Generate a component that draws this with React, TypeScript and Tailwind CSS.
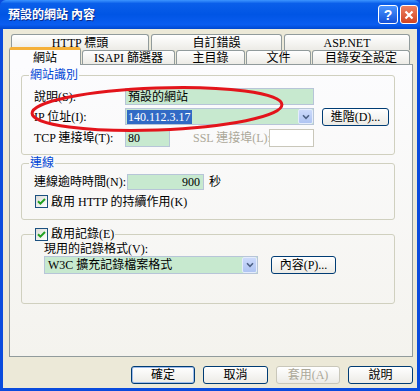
import type { ReactNode } from "react";

const FONT = "font-['Liberation_Serif','Noto_Sans_CJK_TC',serif]";

function Btn({
  children,
  className = "",
  disabled = false,
  primary = false,
}: {
  children: ReactNode;
  className?: string;
  disabled?: boolean;
  primary?: boolean;
}) {
  return (
    <div
      className={`flex h-[18px] items-center justify-center whitespace-nowrap rounded-[3px] border bg-linear-to-b from-white to-[#ECEBE6] text-[12px] leading-[14px] ${
        disabled ? "border-[#C9C7BA] text-[#ACA899]" : "border-[#003C74] text-black"
      } ${primary ? "shadow-[inset_0_0_0_1px_#9FBCEB]" : ""} ${className}`}
    >
      {children}
    </div>
  );
}

function Check() {
  return (
    <div className="flex h-[13px] w-[13px] shrink-0 items-center justify-center border border-[#1C5180] bg-linear-to-br from-[#DCDCD7] to-white">
      <svg width="9" height="9" viewBox="0 0 9 9">
        <path d="M1 4.2 L3.4 6.6 L8 2" fill="none" stroke="#21A121" strokeWidth="2" />
      </svg>
    </div>
  );
}

function ComboArrow() {
  return (
    <div className="flex h-full w-[15px] items-center justify-center rounded-[2px] border border-[#E4ECFC] bg-linear-to-b from-[#CCDAFB] to-[#AFC4F2]">
      <svg width="8" height="6" viewBox="0 0 8 6">
        <path d="M1 1.3 L4 4.3 L7 1.3" fill="none" stroke="#4D6185" strokeWidth="1.6" />
      </svg>
    </div>
  );
}

function Tab({ label, className = "" }: { label: string; className?: string }) {
  return (
    <div
      className={`flex items-center justify-center whitespace-nowrap rounded-t-[3px] border border-b-0 border-[#919B9C] bg-linear-to-b from-white to-[#ECEBE6] text-[12px] leading-[14px] ${className}`}
    >
      {label}
    </div>
  );
}

export default function App() {
  return (
    <div className={`relative flex h-[391px] w-[420px] flex-col overflow-hidden bg-[#0A4BDD] text-black ${FONT}`}>
      {/* title bar */}
      <div className="flex h-[29px] shrink-0 items-center justify-between rounded-t-[6px] bg-[linear-gradient(180deg,#3D95FF_0%,#0A5FEA_12%,#0055E5_50%,#0A5DF0_85%,#0048D0_100%)] pl-[8px] pr-[2px]">
        <span className="text-[12px] font-bold leading-[14px] text-white [text-shadow:1px_1px_0_#0A2A8A]">
          預設的網站 內容
        </span>
        <div className="flex items-center gap-[2px]">
          <div className="flex h-[19px] w-[20px] items-center justify-center rounded-[3px] border border-white bg-linear-to-b from-[#4C95FF] to-[#1550D8] text-[14px] font-bold leading-none text-white font-['Liberation_Sans',sans-serif]">
            ?
          </div>
          <div className="flex h-[19px] w-[18px] items-center justify-center rounded-[3px] border border-white bg-linear-to-b from-[#EE8060] to-[#D0421E]">
            <svg width="10" height="10" viewBox="0 0 10 10">
              <path d="M1.5 1.5 L8.5 8.5 M8.5 1.5 L1.5 8.5" stroke="white" strokeWidth="2.2" />
            </svg>
          </div>
        </div>
      </div>

      {/* body */}
      <div className="mx-[3px] mb-[3px] flex flex-1 flex-col bg-[#ECE9D8] pb-[4px] pl-[6px] pr-[4px] pt-[5px]">
        {/* tab row 1 */}
        <div className="ml-[2px] flex h-[16px] gap-[2px]">
          <Tab label="HTTP 標頭" className="w-[138px]" />
          <Tab label="自訂錯誤" className="w-[131px]" />
          <Tab label="ASP.NET" className="w-[126px]" />
        </div>
        {/* tab row 2 */}
        <div className="flex h-[14px] items-end gap-[1px]">
          <div className="relative z-10 -mb-[1px] flex h-[18px] w-[72px] items-start justify-center rounded-t-[3px] border-x border-t-[3px] border-[#919B9C] border-t-[#F5B038] bg-[#FCFCFE] pt-[1px] text-[12px] leading-[14px]">
            網站
          </div>
          <Tab label="ISAPI 篩選器" className="h-[14px] w-[93px]" />
          <Tab label="主目錄" className="h-[14px] w-[69px]" />
          <Tab label="文件" className="h-[14px] w-[65px]" />
          <Tab label="目錄安全設定" className="h-[14px] w-[98px]" />
        </div>

        {/* panel */}
        <div className="flex h-[293px] shrink-0 flex-col whitespace-nowrap border border-[#919B9C] bg-linear-to-b from-[#FCFCFE] to-[#F4F3EE] pl-[11px] text-[12px] leading-[14px]">
          {/* 網站識別 */}
          <fieldset className="mt-[3px] w-[374px] rounded-[3px] border border-[#D0D0BF] px-0 pb-[7px] pt-[6px]">
            <legend className="ml-[7px] px-[1px] leading-[14px] text-[#0046D5]">網站識別</legend>
            <div className="flex flex-col gap-[3px] pl-[12px]">
              <div className="flex h-[17px] items-center">
                <span className="w-[91px]">說明(S):</span>
                <div className="flex h-full w-[189px] items-center border border-[#B7C5D8] bg-[#C7E9CF] pl-[2px]">
                  預設的網站
                </div>
              </div>
              <div className="flex h-[17px] items-center">
                <span className="w-[91px]">IP 位址(I):</span>
                <div className="flex h-full w-[189px] items-center border border-[#B7C5D8] bg-[#C7E9CF] pl-[1px]">
                  <span className="flex-1">
                    <span className="bg-[#316AC5] px-[1px] text-white">140.112.3.17</span>
                  </span>
                  <ComboArrow />
                </div>
                <Btn className="ml-[8px] w-[67px]">進階(D)...</Btn>
              </div>
              <div className="mt-[1px] flex h-[18px] items-center">
                <span className="w-[91px]">TCP 連接埠(T):</span>
                <div className="h-full w-[45px] border border-[#B7C5D8] bg-[#C7E9CF] pl-[2px] pt-[1px]">80</div>
                <span className="ml-[23px] w-[76px] text-[#ACA899]">SSL 連接埠(L):</span>
                <div className="h-full w-[45px] border border-[#C9C7BA] bg-white" />
              </div>
            </div>
          </fieldset>

          {/* 連線 */}
          <fieldset className="mt-[1px] w-[374px] rounded-[3px] border border-[#D0D0BF] px-0 pb-[11px] pt-[4px]">
            <legend className="ml-[7px] px-[1px] leading-[14px] text-[#0046D5]">連線</legend>
            <div className="pl-[12px]">
              <div className="flex h-[16px] items-center">
                <span className="w-[93px]">連線逾時時間(N):</span>
                <div className="flex h-full w-[77px] items-center justify-end border border-[#B7C5D8] bg-[#C7E9CF] pr-[3px]">
                  900
                </div>
                <span className="ml-[5px]">秒</span>
              </div>
              <div className="mt-[5px] flex h-[13px] items-center gap-[3px] pl-[1px]">
                <Check />
                <span>啟用 HTTP 的持續作用(K)</span>
              </div>
            </div>
          </fieldset>

          {/* 啟用記錄 */}
          <fieldset className="mt-[7px] w-[374px] rounded-[3px] border border-[#D0D0BF] px-0 pb-[29px]">
            <legend className="ml-[12px] flex items-center gap-[3px] px-[1px] leading-[14px]">
              <Check />
              <span>啟用記錄(E)</span>
            </legend>
            <div className="pl-[22px]">
              <div className="mt-[1px] h-[13px]">現用的記錄格式(V):</div>
              <div className="mt-[1px] flex h-[18px] items-center">
                <div className="flex h-full w-[214px] items-center border border-[#B7C5D8] bg-[#C7E9CF] pl-[3px]">
                  <span className="flex-1">W3C 擴充記錄檔案格式</span>
                  <ComboArrow />
                </div>
                <Btn className="ml-[13px] w-[65px]">內容(P)...</Btn>
              </div>
            </div>
          </fieldset>
        </div>

        {/* dialog buttons */}
        <div className="mt-[9px] flex justify-end gap-[8px]">
          <Btn primary className="w-[64px]">確定</Btn>
          <Btn className="w-[65px]">取消</Btn>
          <Btn disabled className="w-[64px]">套用(A)</Btn>
          <Btn className="w-[65px]">說明</Btn>
        </div>
      </div>

      {/* red annotation ellipse */}
      <svg className="pointer-events-none absolute left-0 top-0" width="420" height="391">
        <ellipse cx="157" cy="109" rx="125" ry="21" fill="none" stroke="#E3141B" strokeWidth="3" transform="rotate(-2 157 109)" />
      </svg>
    </div>
  );
}
